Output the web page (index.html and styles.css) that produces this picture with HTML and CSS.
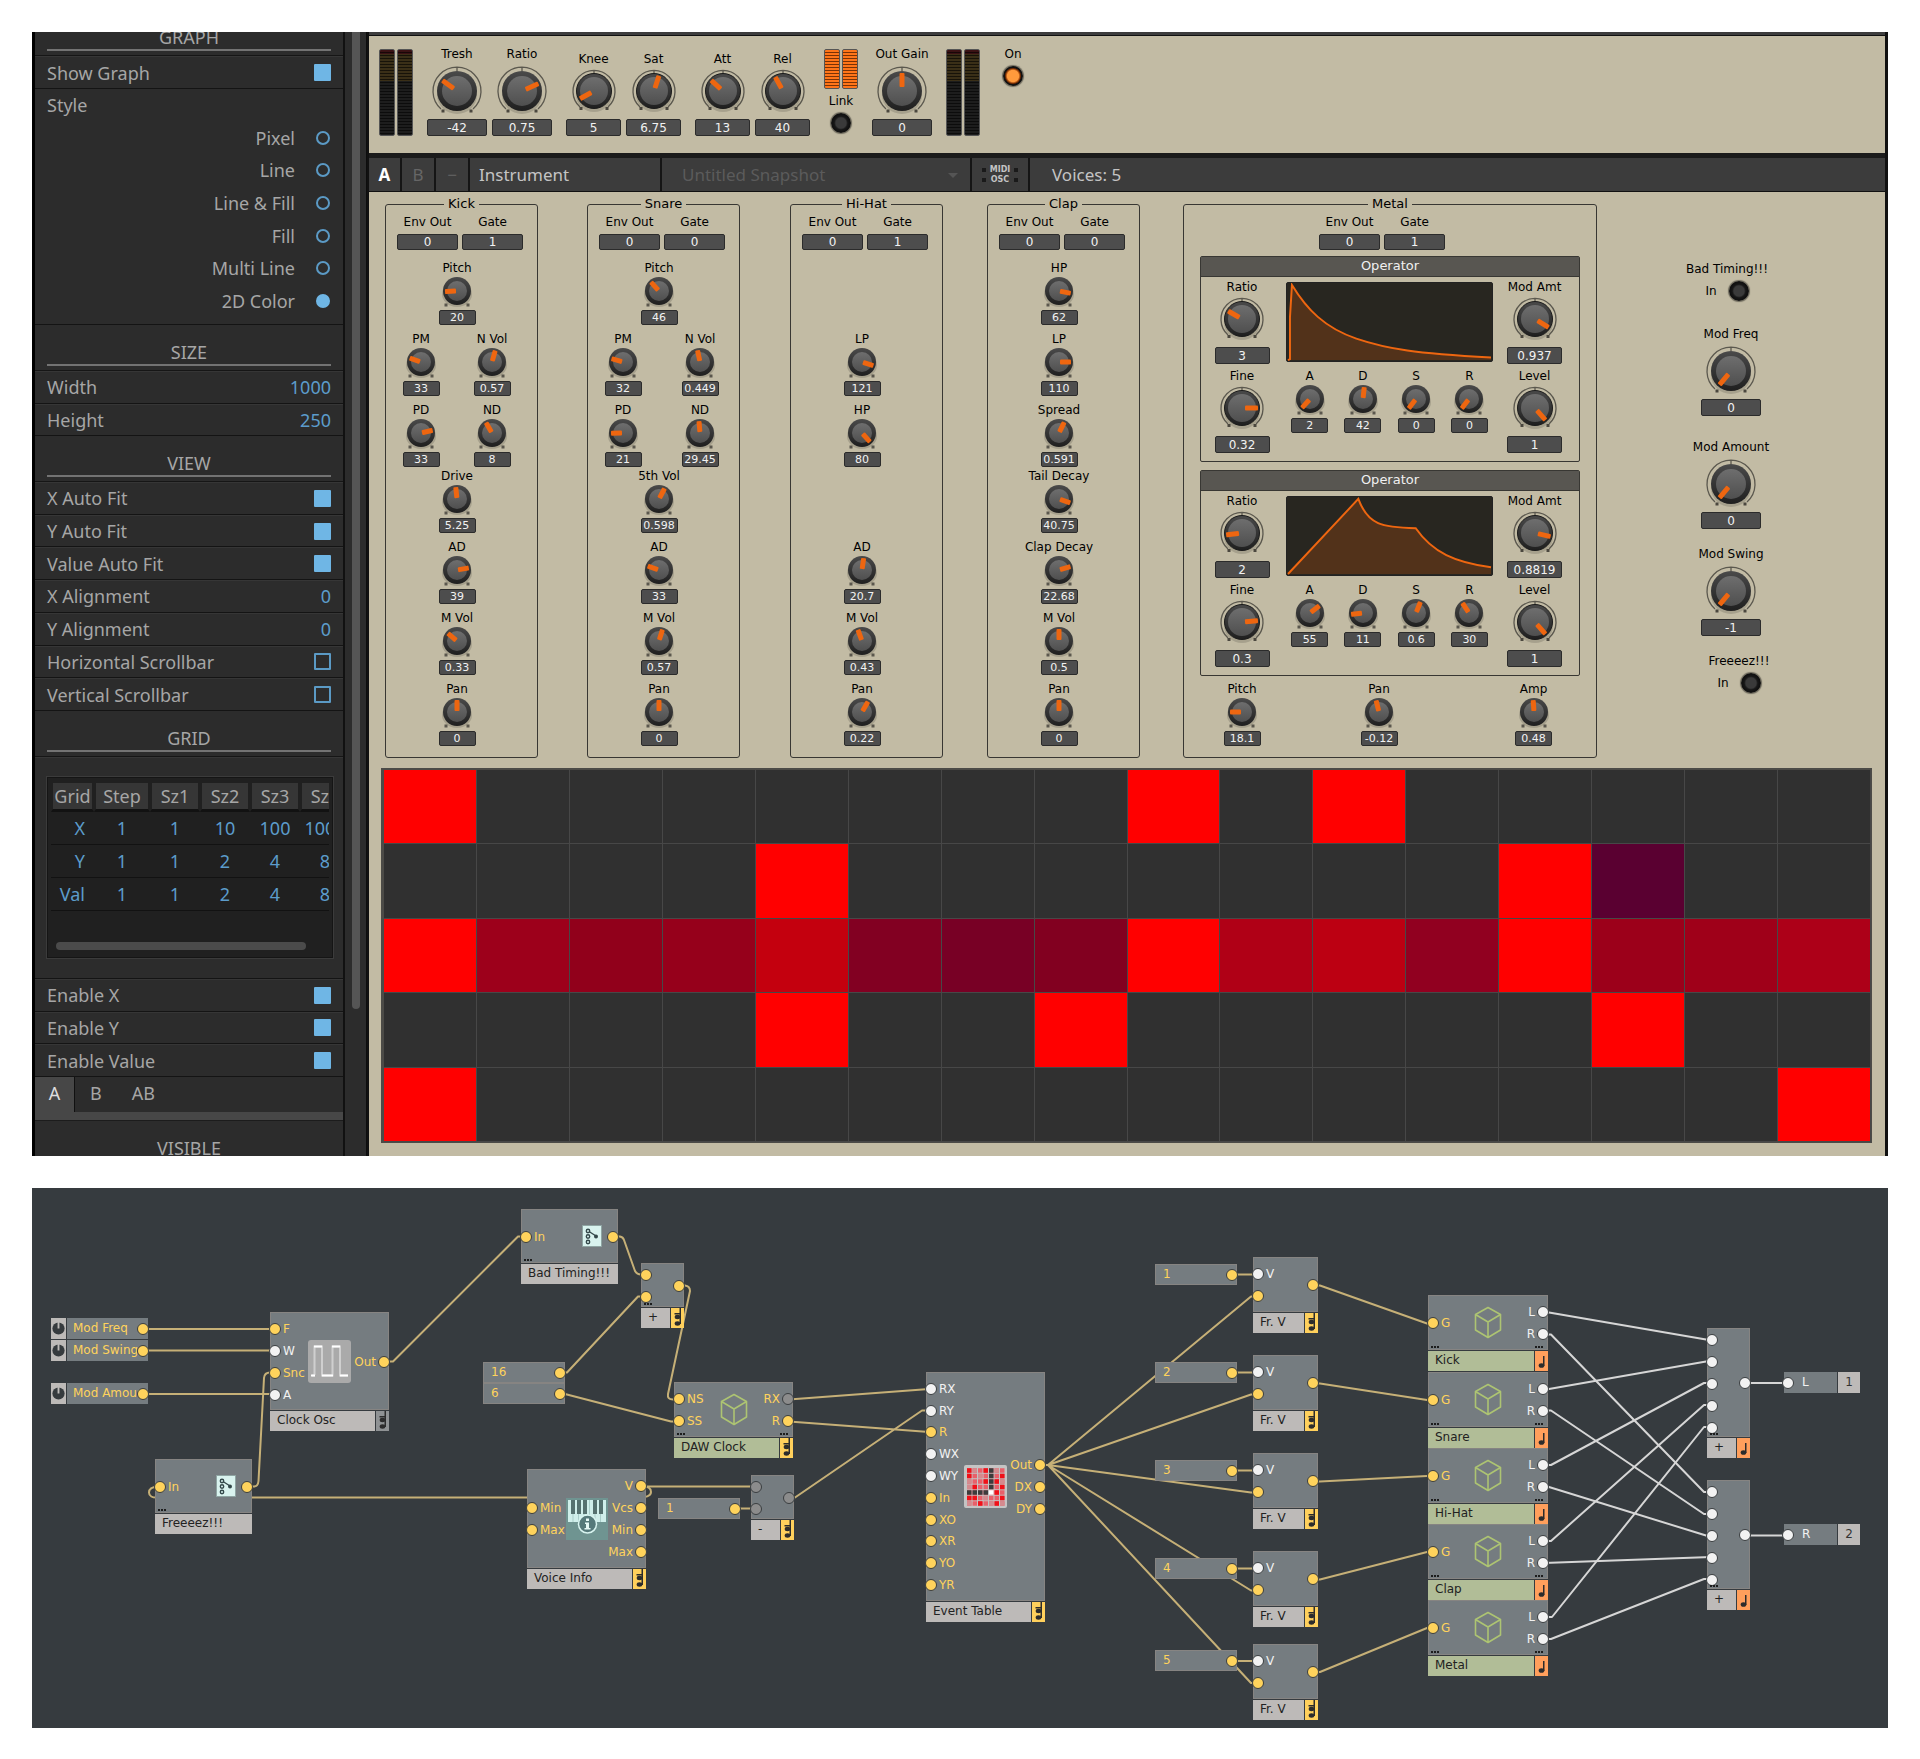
FILE: index.html
```html
<!DOCTYPE html>
<html lang="en">
<head>
<meta charset="utf-8">
<meta name="viewport" content="width=device-width, initial-scale=1">
<title>Drum Machine</title>
<link rel="stylesheet" href="styles.css">
</head>
<body>
<svg class="defs" width="0" height="0" aria-hidden="true">
  <defs>
    <linearGradient id="body" x1="0" y1="0" x2="0" y2="1"><stop offset="0" stop-color="#4a4a4a"/><stop offset="1" stop-color="#1f1f1f"/></linearGradient>
    <linearGradient id="cap" x1="0" y1="0" x2="0" y2="1"><stop offset="0" stop-color="#6e6e6e"/><stop offset="1" stop-color="#4f4f4f"/></linearGradient>
    <symbol id="ks" viewBox="-18 -15 36 34" overflow="visible">
      <ellipse cy="3" rx="15" ry="13" fill="#000" opacity=".14"/>
      <circle r="14" fill="url(#body)"/><circle r="10" fill="url(#cap)"/>
      <path d="M-12.500 12.500h3v3h-3zM9.500 12.500h3v3h-3z" fill="#5a574d"/>
    </symbol>
    <symbol id="km" viewBox="-22 -24 44 52" overflow="visible">
      <path d="M-14 16A21 21 0 1 1 14 16M0-21V-17" fill="none" stroke="#5b584e" stroke-width="1.300"/>
      <ellipse cy="4" rx="18" ry="17" fill="#000" opacity=".14"/>
      <circle r="17.500" fill="url(#body)" stroke="#1b1b1b"/><circle r="14" fill="url(#cap)"/>
      <path d="M-14.500 16h3v3h-3zM11.500 16h3v3h-3z" fill="#4a473e"/>
    </symbol>
    <symbol id="kl" viewBox="-26 -29 52 57" overflow="visible">
      <path d="M-16 18A24 24 0 1 1 16 18M0-24V-20" fill="none" stroke="#5b584e" stroke-width="1.300"/>
      <ellipse cy="4" rx="20" ry="19" fill="#000" opacity=".14"/>
      <circle r="20" fill="url(#body)"/><circle r="15" fill="url(#cap)"/>
      <path d="M-15.500 18.500h3v3h-3zM12.500 18.500h3v3h-3z" fill="#4a473e"/>
    </symbol>
    <rect id="ps" x="-2.500" y="-12" width="5" height="11" rx="1" fill="#ee6610"/>
    <rect id="pm" x="-2.500" y="-16" width="5" height="13" rx="1" fill="#ee6610"/>
    <rect id="pl" x="-2.500" y="-18" width="5" height="14" rx="1" fill="#ee6610"/>
    <symbol id="cube" viewBox="0 0 28 33"><path d="M14 1.500 26.500 8.500V24L14 31.500 1.500 24V8.500zM1.500 8.500 14 16 26.500 8.500M14 16V31.500" fill="none" stroke="#adc472" stroke-width="1.600" stroke-linejoin="round"/></symbol>
    <symbol id="switch" viewBox="0 0 20 22"><path fill="#d9f3ef" stroke="#8fa5a3" d="M.5.5h19v21H.5z"/><g fill="none" stroke="#33484a" stroke-width="1.400"><circle cx="6" cy="6" r="1.700"/><circle cx="6" cy="11.500" r="1.700"/><circle cx="6" cy="17" r="1.700"/><path d="M7 6.500 14 11"/></g><circle cx="14" cy="11.500" r="2" fill="#33484a"/></symbol>
    <symbol id="poly" viewBox="0 0 13 20"><path d="M8.500 0H10v16H8.500zM3.500 5H9v1.500H3.500z"/><ellipse cx="6.500" cy="9" rx="2.800" ry="2.200"/><ellipse cx="6.500" cy="15.500" rx="2.800" ry="2.200"/></symbol>
    <symbol id="mono" viewBox="0 0 13 20"><path d="M8 5h1.500v10H8z"/><ellipse cx="6.500" cy="14.500" rx="2.800" ry="2.300"/></symbol>
    <symbol id="dial" viewBox="0 0 16 21"><circle cx="8" cy="10.500" r="6.500" fill="#363b3e"/><path d="M7 2.500h2v8H7z" fill="#bdbab8"/></symbol>
  </defs>
</svg>

<main class="instrument">
  <aside class="inspector">
    <div class="props">
      <h2 class="section section--cut">GRAPH</h2>
      <div class="rows rows--one">
        <label class="row">Show Graph<input type="checkbox" checked></label>
      </div>
      <fieldset class="style-group">
        <div class="row row--plain">Style</div>
        <label class="row row--radio">Pixel<input type="radio" name="style"></label>
        <label class="row row--radio">Line<input type="radio" name="style"></label>
        <label class="row row--radio">Line &amp; Fill<input type="radio" name="style"></label>
        <label class="row row--radio">Fill<input type="radio" name="style"></label>
        <label class="row row--radio">Multi Line<input type="radio" name="style"></label>
        <label class="row row--radio">2D Color<input type="radio" name="style" checked></label>
      </fieldset>
      <h2 class="section">SIZE</h2>
      <div class="rows rows--two">
        <label class="row">Width<input class="num" type="text" value="1000"></label>
        <label class="row">Height<input class="num" type="text" value="250"></label>
      </div>
      <h2 class="section">VIEW</h2>
      <div class="rows rows--seven">
        <label class="row">X Auto Fit<input type="checkbox" checked></label>
        <label class="row">Y Auto Fit<input type="checkbox" checked></label>
        <label class="row">Value Auto Fit<input type="checkbox" checked></label>
        <label class="row">X Alignment<input class="num" type="text" value="0"></label>
        <label class="row">Y Alignment<input class="num" type="text" value="0"></label>
        <label class="row">Horizontal Scrollbar<input type="checkbox"></label>
        <label class="row">Vertical Scrollbar<input type="checkbox"></label>
      </div>
      <h2 class="section">GRID</h2>
      <div class="grid-area">
        <div class="grid-box">
          <div class="grid-clip">
            <table class="grid-table">
              <thead><tr><th class="c-grid">Grid</th><th class="c-step">Step</th><th>Sz1</th><th>Sz2</th><th>Sz3</th><th>Sz4</th></tr></thead>
              <tbody>
                <tr><td>X</td><td>1</td><td>1</td><td>10</td><td>100</td><td>1000</td></tr>
                <tr><td>Y</td><td>1</td><td>1</td><td>2</td><td>4</td><td>8</td></tr>
                <tr><td>Val</td><td>1</td><td>1</td><td>2</td><td>4</td><td>8</td></tr>
              </tbody>
            </table>
          </div>
          <div class="hscroll"></div>
        </div>
      </div>
      <div class="rows rows--three">
        <label class="row">Enable X<input type="checkbox" checked></label>
        <label class="row">Enable Y<input type="checkbox" checked></label>
        <label class="row">Enable Value<input type="checkbox" checked></label>
      </div>
      <nav class="tabs">
        <button class="tab tab--on" type="button">A</button>
        <button class="tab" type="button">B</button>
        <button class="tab" type="button">AB</button>
      </nav>
      <h2 class="section section--visible">VISIBLE</h2>
    </div>
    <div class="vscroll"><div class="vscroll-thumb"></div></div>
  </aside>

  <div class="stage">
    <div class="bar-edge"></div>
    <section class="compressor">
      <div class="meters"><i class="meter"></i><i class="meter"></i></div>
      <div class="pair">
        <label class="ctl ctl--l">Tresh<svg><use href="#kl"/><use href="#pl" transform="translate(26 29) rotate(-54)"/></svg><input type="text" value="-42"></label>
        <label class="ctl ctl--l">Ratio<svg><use href="#kl"/><use href="#pl" transform="translate(26 29) rotate(66)"/></svg><input type="text" value="0.75"></label>
      </div>
      <div class="pair">
        <label class="ctl ctl--m">Knee<svg><use href="#km"/><use href="#pm" transform="translate(22 24) rotate(-119)"/></svg><input type="text" value="5"></label>
        <label class="ctl ctl--m">Sat<svg><use href="#km"/><use href="#pm" transform="translate(22 24) rotate(18)"/></svg><input type="text" value="6.75"></label>
      </div>
      <div class="pair">
        <label class="ctl ctl--m">Att<svg><use href="#km"/><use href="#pm" transform="translate(22 24) rotate(-48)"/></svg><input type="text" value="13"></label>
        <label class="ctl ctl--m">Rel<svg><use href="#km"/><use href="#pm" transform="translate(22 24) rotate(-29)"/></svg><input type="text" value="40"></label>
      </div>
      <div class="link">
        <div class="meters meters--lit"><i class="meter"></i><i class="meter"></i></div>
        <label class="lamp-label" for="link">Link</label>
        <button class="lamp" id="link" type="button" aria-label="Link"></button>
      </div>
      <label class="ctl ctl--l">Out Gain<svg><use href="#kl"/><use href="#pl" transform="translate(26 29)"/></svg><input type="text" value="0"></label>
      <div class="meters"><i class="meter"></i><i class="meter"></i></div>
      <div class="power">
        <label class="lamp-label" for="on">On</label>
        <button class="lamp lamp--on" id="on" type="button" aria-label="On"></button>
      </div>
    </section>

    <header class="bar">
      <button class="bar-btn bar-btn--on" type="button">A</button>
      <button class="bar-btn" type="button">B</button>
      <button class="bar-btn" type="button">−</button>
      <span class="bar-name">Instrument</span>
      <span class="bar-snap"><select aria-label="Snapshot"><option>Untitled Snapshot</option></select></span>
      <span class="bar-midi"><i></i><b>MIDI<br>OSC</b><i></i></span>
      <span class="bar-voices">Voices: 5</span>
    </header>

    <section class="panel">
      <div class="strips">
        <fieldset class="strip">
          <legend>Kick</legend>
          <div class="io"><label>Env Out<input type="text" value="0"></label><label>Gate<input type="text" value="1"></label></div>
          <div class="knobs">
            <label class="ctl span r1">Pitch<svg><use href="#ks"/><use href="#ps" transform="translate(18 15) rotate(-93)"/></svg><input type="text" value="20"></label>
            <label class="ctl r2">PM<svg><use href="#ks"/><use href="#ps" transform="translate(18 15) rotate(-71)"/></svg><input type="text" value="33"></label>
            <label class="ctl r2">N Vol<svg><use href="#ks"/><use href="#ps" transform="translate(18 15) rotate(16)"/></svg><input type="text" value="0.57"></label>
            <label class="ctl r3">PD<svg><use href="#ks"/><use href="#ps" transform="translate(18 15) rotate(77)"/></svg><input type="text" value="33"></label>
            <label class="ctl r3">ND<svg><use href="#ks"/><use href="#ps" transform="translate(18 15) rotate(-30)"/></svg><input type="text" value="8"></label>
            <label class="ctl span r4">Drive<svg><use href="#ks"/><use href="#ps" transform="translate(18 15) rotate(-6)"/></svg><input type="text" value="5.25"></label>
            <label class="ctl span r5">AD<svg><use href="#ks"/><use href="#ps" transform="translate(18 15) rotate(80)"/></svg><input type="text" value="39"></label>
            <label class="ctl span r6">M Vol<svg><use href="#ks"/><use href="#ps" transform="translate(18 15) rotate(-50)"/></svg><input type="text" value="0.33"></label>
            <label class="ctl span r7">Pan<svg><use href="#ks"/><use href="#ps" transform="translate(18 15)"/></svg><input type="text" value="0"></label>
          </div>
        </fieldset>
        <fieldset class="strip">
          <legend>Snare</legend>
          <div class="io"><label>Env Out<input type="text" value="0"></label><label>Gate<input type="text" value="0"></label></div>
          <div class="knobs knobs--wide">
            <label class="ctl span r1">Pitch<svg><use href="#ks"/><use href="#ps" transform="translate(18 15) rotate(-42)"/></svg><input type="text" value="46"></label>
            <label class="ctl r2">PM<svg><use href="#ks"/><use href="#ps" transform="translate(18 15) rotate(-74)"/></svg><input type="text" value="32"></label>
            <label class="ctl r2">N Vol<svg><use href="#ks"/><use href="#ps" transform="translate(18 15) rotate(-12)"/></svg><input type="text" value="0.449"></label>
            <label class="ctl r3">PD<svg><use href="#ks"/><use href="#ps" transform="translate(18 15) rotate(-91)"/></svg><input type="text" value="21"></label>
            <label class="ctl r3">ND<svg><use href="#ks"/><use href="#ps" transform="translate(18 15) rotate(-5)"/></svg><input type="text" value="29.45"></label>
            <label class="ctl span r4">5th Vol<svg><use href="#ks"/><use href="#ps" transform="translate(18 15) rotate(28)"/></svg><input type="text" value="0.598"></label>
            <label class="ctl span r5">AD<svg><use href="#ks"/><use href="#ps" transform="translate(18 15) rotate(-71)"/></svg><input type="text" value="33"></label>
            <label class="ctl span r6">M Vol<svg><use href="#ks"/><use href="#ps" transform="translate(18 15) rotate(17)"/></svg><input type="text" value="0.57"></label>
            <label class="ctl span r7">Pan<svg><use href="#ks"/><use href="#ps" transform="translate(18 15)"/></svg><input type="text" value="0"></label>
          </div>
        </fieldset>
        <fieldset class="strip">
          <legend>Hi-Hat</legend>
          <div class="io"><label>Env Out<input type="text" value="0"></label><label>Gate<input type="text" value="1"></label></div>
          <div class="knobs">
            <label class="ctl span r2">LP<svg><use href="#ks"/><use href="#ps" transform="translate(18 15) rotate(108)"/></svg><input type="text" value="121"></label>
            <label class="ctl span r3">HP<svg><use href="#ks"/><use href="#ps" transform="translate(18 15) rotate(138)"/></svg><input type="text" value="80"></label>
            <label class="ctl span r5">AD<svg><use href="#ks"/><use href="#ps" transform="translate(18 15) rotate(8)"/></svg><input type="text" value="20.7"></label>
            <label class="ctl span r6">M Vol<svg><use href="#ks"/><use href="#ps" transform="translate(18 15) rotate(-20)"/></svg><input type="text" value="0.43"></label>
            <label class="ctl span r7">Pan<svg><use href="#ks"/><use href="#ps" transform="translate(18 15) rotate(30)"/></svg><input type="text" value="0.22"></label>
          </div>
        </fieldset>
        <fieldset class="strip">
          <legend>Clap</legend>
          <div class="io"><label>Env Out<input type="text" value="0"></label><label>Gate<input type="text" value="0"></label></div>
          <div class="knobs">
            <label class="ctl span r1">HP<svg><use href="#ks"/><use href="#ps" transform="translate(18 15) rotate(101)"/></svg><input type="text" value="62"></label>
            <label class="ctl span r2">LP<svg><use href="#ks"/><use href="#ps" transform="translate(18 15) rotate(90)"/></svg><input type="text" value="110"></label>
            <label class="ctl span r3">Spread<svg><use href="#ks"/><use href="#ps" transform="translate(18 15) rotate(26)"/></svg><input type="text" value="0.591"></label>
            <label class="ctl span r4">Tail Decay<svg><use href="#ks"/><use href="#ps" transform="translate(18 15) rotate(109)"/></svg><input type="text" value="40.75"></label>
            <label class="ctl span r5">Clap Decay<svg><use href="#ks"/><use href="#ps" transform="translate(18 15) rotate(73)"/></svg><input type="text" value="22.68"></label>
            <label class="ctl span r6">M Vol<svg><use href="#ks"/><use href="#ps" transform="translate(18 15)"/></svg><input type="text" value="0.5"></label>
            <label class="ctl span r7">Pan<svg><use href="#ks"/><use href="#ps" transform="translate(18 15)"/></svg><input type="text" value="0"></label>
          </div>
        </fieldset>
        <fieldset class="strip strip--metal">
          <legend>Metal</legend>
          <div class="io"><label>Env Out<input type="text" value="0"></label><label>Gate<input type="text" value="1"></label></div>
          <section class="operator">
            <h3>Operator</h3>
            <div class="op-body">
              <div class="op-side">
                <label class="ctl ctl--m">Ratio<svg><use href="#km"/><use href="#pm" transform="translate(22 24) rotate(-60)"/></svg><input type="text" value="3"></label>
                <label class="ctl ctl--m">Fine<svg><use href="#km"/><use href="#pm" transform="translate(22 24) rotate(90)"/></svg><input type="text" value="0.32"></label>
              </div>
              <div class="op-mid">
                <svg class="env" viewBox="0 0 207 80" preserveAspectRatio="none"><path class="env-fill" d="M1 79 3 78V35L5 2C20 27 38 46 70 57S130 72 206 76.500V79z"/><path class="env-line" d="M1 79 3 78V35L5 2C20 27 38 46 70 57S130 72 206 76.500"/></svg>
                <div class="adsr">
                  <label class="ctl">A<svg><use href="#ks"/><use href="#ps" transform="translate(18 15) rotate(-138)"/></svg><input type="text" value="2"></label>
                  <label class="ctl">D<svg><use href="#ks"/><use href="#ps" transform="translate(18 15) rotate(6)"/></svg><input type="text" value="42"></label>
                  <label class="ctl">S<svg><use href="#ks"/><use href="#ps" transform="translate(18 15) rotate(-142)"/></svg><input type="text" value="0"></label>
                  <label class="ctl">R<svg><use href="#ks"/><use href="#ps" transform="translate(18 15) rotate(-142)"/></svg><input type="text" value="0"></label>
                </div>
              </div>
              <div class="op-side">
                <label class="ctl ctl--m">Mod Amt<svg><use href="#km"/><use href="#pm" transform="translate(22 24) rotate(122)"/></svg><input type="text" value="0.937"></label>
                <label class="ctl ctl--m">Level<svg><use href="#km"/><use href="#pm" transform="translate(22 24) rotate(139)"/></svg><input type="text" value="1"></label>
              </div>
            </div>
          </section>
          <section class="operator">
            <h3>Operator</h3>
            <div class="op-body">
              <div class="op-side">
                <label class="ctl ctl--m">Ratio<svg><use href="#km"/><use href="#pm" transform="translate(22 24) rotate(-97)"/></svg><input type="text" value="2"></label>
                <label class="ctl ctl--m">Fine<svg><use href="#km"/><use href="#pm" transform="translate(22 24) rotate(85)"/></svg><input type="text" value="0.3"></label>
              </div>
              <div class="op-mid">
                <svg class="env" viewBox="0 0 207 80" preserveAspectRatio="none"><path class="env-fill" d="M1 79 72 2C82 29 96 31 130 32C147 57 170 67 206 72V79z"/><path class="env-line" d="M1 79 72 2C82 29 96 31 130 32C147 57 170 67 206 72"/></svg>
                <div class="adsr">
                  <label class="ctl">A<svg><use href="#ks"/><use href="#ps" transform="translate(18 15) rotate(52)"/></svg><input type="text" value="55"></label>
                  <label class="ctl">D<svg><use href="#ks"/><use href="#ps" transform="translate(18 15) rotate(-97)"/></svg><input type="text" value="11"></label>
                  <label class="ctl">S<svg><use href="#ks"/><use href="#ps" transform="translate(18 15) rotate(22)"/></svg><input type="text" value="0.6"></label>
                  <label class="ctl">R<svg><use href="#ks"/><use href="#ps" transform="translate(18 15) rotate(-33)"/></svg><input type="text" value="30"></label>
                </div>
              </div>
              <div class="op-side">
                <label class="ctl ctl--m">Mod Amt<svg><use href="#km"/><use href="#pm" transform="translate(22 24) rotate(103)"/></svg><input type="text" value="0.8819"></label>
                <label class="ctl ctl--m">Level<svg><use href="#km"/><use href="#pm" transform="translate(22 24) rotate(139)"/></svg><input type="text" value="1"></label>
              </div>
            </div>
          </section>
          <div class="metal-out">
            <label class="ctl">Pitch<svg><use href="#ks"/><use href="#ps" transform="translate(18 15) rotate(-90)"/></svg><input type="text" value="18.1"></label>
            <label class="ctl">Pan<svg><use href="#ks"/><use href="#ps" transform="translate(18 15) rotate(-14)"/></svg><input type="text" value="-0.12"></label>
            <label class="ctl">Amp<svg><use href="#ks"/><use href="#ps" transform="translate(18 15) rotate(-4)"/></svg><input type="text" value="0.48"></label>
          </div>
        </fieldset>
        <div class="mods">
          <div class="trigger trigger--timing"><span>Bad Timing!!!</span><div><label for="timing">In</label><button class="lamp" id="timing" type="button" aria-label="Bad Timing In"></button></div></div>
          <label class="ctl ctl--l mod-freq">Mod Freq<svg><use href="#kl"/><use href="#pl" transform="translate(26 29) rotate(-140)"/></svg><input type="text" value="0"></label>
          <label class="ctl ctl--l mod-amount">Mod Amount<svg><use href="#kl"/><use href="#pl" transform="translate(26 29) rotate(-140)"/></svg><input type="text" value="0"></label>
          <label class="ctl ctl--l mod-swing">Mod Swing<svg><use href="#kl"/><use href="#pl" transform="translate(26 29) rotate(-140)"/></svg><input type="text" value="-1"></label>
          <div class="trigger trigger--freeze"><span>Freeeez!!!</span><div><label for="freeze">In</label><button class="lamp" id="freeze" type="button" aria-label="Freeeez In"></button></div></div>
        </div>
      </div>

      <div class="sequencer">
        <i style="background:#f00"></i><i></i><i></i><i></i><i></i><i></i><i></i><i></i><i style="background:#f00"></i><i></i><i style="background:#f00"></i><i></i><i></i><i></i><i></i><i></i>
        <i></i><i></i><i></i><i></i><i style="background:#f00"></i><i></i><i></i><i></i><i></i><i></i><i></i><i></i><i style="background:#f00"></i><i style="background:#5a0031"></i><i></i><i></i>
        <i style="background:#f00"></i><i style="background:#9d001b"></i><i style="background:#91001b"></i><i style="background:#96001b"></i><i style="background:#c4000e"></i><i style="background:#820022"></i><i style="background:#780025"></i><i style="background:#820020"></i><i style="background:#f00"></i><i style="background:#b00016"></i><i style="background:#bc0012"></i><i style="background:#910020"></i><i style="background:#f00"></i><i style="background:#9c001a"></i><i style="background:#9f0019"></i><i style="background:#ad0018"></i>
        <i></i><i></i><i></i><i></i><i style="background:#f00"></i><i></i><i></i><i style="background:#f00"></i><i></i><i></i><i></i><i></i><i></i><i style="background:#f00"></i><i></i><i></i>
        <i style="background:#f00"></i><i></i><i></i><i></i><i></i><i></i><i></i><i></i><i></i><i></i><i></i><i></i><i></i><i></i><i></i><i style="background:#f00"></i>
      </div>
    </section>
  </div>
</main>

<section class="patch">
  <svg class="wires" viewBox="32 1187 1856 540" width="1856" height="540">
    <g class="wire">
      <path d="M144 1328H274M144 1349.500H274M144 1393H274"/>
      <path d="M248 1485.500H254Q258 1485.500 258.500 1480L264 1377Q264.500 1371.500 270 1371.500H274"/>
      <path d="M158 1485.500Q149 1486 149 1491.500T158 1496.500H636Q651 1497 651 1491T642 1485.500"/>
      <path d="M386 1360.500H393L518 1235.500H524"/>
      <path d="M614 1235.500H620Q623 1236 624 1239L635 1270Q637 1273.500 641 1273.500H645"/>
      <path d="M560 1371.500H567L638 1295.500H645M560 1393H565L671 1420.500H677"/>
      <path d="M680 1284.500H685Q690 1285 690 1290L668 1393Q667 1398.500 673 1398.500H677"/>
      <path d="M789 1398.500 929 1388M789 1420.500 929 1431M789 1496.500H795L922 1409.500H929"/>
      <path d="M642 1485.500H754M735 1507.500H754"/>
      <path d="M1041 1464H1048L1251 1295.500H1257M1048 1464 1251 1393.500H1257M1048 1464 1251 1491.500H1257M1048 1464 1251 1589.500H1257M1048 1464 1251 1682H1257"/>
      <path d="M1232 1273.500H1257M1232 1371.500H1257M1232 1469.500H1257M1232 1567.500H1257M1232 1660H1257"/>
      <path d="M1314 1284.500H1320L1427 1322.500H1432M1314 1382.500H1320L1427 1399H1432M1314 1480.500H1320L1427 1475H1432M1314 1578.500H1320L1427 1551H1432M1314 1671H1320L1427 1627H1432"/>
    </g>
    <g class="wire wire--audio">
      <path d="M1544 1311.500H1549L1706 1338.500H1711M1544 1388H1549L1706 1360.500H1711M1544 1464H1551L1704 1382H1711M1544 1540H1551L1704 1404H1711M1544 1616H1552L1704 1426H1711"/>
      <path d="M1544 1333.500H1551L1704 1491H1711M1544 1409.500H1551L1704 1513H1711M1544 1486H1549L1706 1534.500H1711M1544 1562 1711 1556M1544 1638H1551L1704 1578H1711"/>
      <path d="M1746 1382H1788M1746 1534.500H1788"/>
    </g>
  </svg>

  <div class="knobref" style="left:19px;top:130px"><svg><use href="#dial"/></svg><span>Mod Freq</span><b class="port"></b></div>
  <div class="knobref" style="left:19px;top:152px"><svg><use href="#dial"/></svg><span>Mod Swing</span><b class="port"></b></div>
  <div class="knobref" style="left:19px;top:195px"><svg><use href="#dial"/></svg><span>Mod Amour</span><b class="port"></b></div>

  <div class="node" style="left:238px;top:124px;width:119px">
    <div class="node-body" style="height:98px">
      <div class="ports ports--6"><b class="port">F</b><b class="port port--w">W</b><b class="port">Snc</b><b class="port port--w">A</b></div>
      <svg class="pic" width="43" height="43" viewBox="0 0 43 43"><rect width="43" height="43" rx="3" fill="#aaa"/><path d="M4 35.500H7M6.500 35V6.500H14V35.500H24.500V6.500H32V35.500H40" fill="none" stroke="#cfcfcf" stroke-width="2"/><path d="M3 35.500H7M6 6.500H14M14 35.500H25M24 6.500H32M32 35.500H40" stroke="#fff" stroke-width="2"/></svg>
      <div class="ports ports--out ports--38"><b class="port">Out</b></div>
    </div>
    <div class="node-foot"><span>Clock Osc</span><svg class="badge badge--g"><use href="#poly"/></svg></div>
  </div>
  <div class="node" style="left:123px;top:271px;width:97px">
    <div class="node-body node-body--switch dots" style="height:54px">
      <div class="ports ports--17"><b class="port">In</b></div>
      <svg class="pic" width="20" height="22"><use href="#switch"/></svg>
      <div class="ports ports--out ports--17"><b class="port"></b></div>
    </div>
    <div class="node-foot"><span>Freeeez!!!</span></div>
  </div>
  <div class="node" style="left:489px;top:21px;width:97px">
    <div class="node-body node-body--switch dots" style="height:54px">
      <div class="ports ports--17"><b class="port">In</b></div>
      <svg class="pic" width="20" height="22"><use href="#switch"/></svg>
      <div class="ports ports--out ports--17"><b class="port"></b></div>
    </div>
    <div class="node-foot"><span>Bad Timing!!!</span></div>
  </div>
  <div class="node" style="left:609px;top:75px;width:43px">
    <div class="node-body dots" style="height:44px"><div class="ports"><b class="port"></b><b class="port"></b></div><div class="ports ports--out ports--11"><b class="port"></b></div></div>
    <div class="node-foot"><span>+</span><svg class="badge"><use href="#poly"/></svg></div>
  </div>
  <div class="const const--wide" style="left:451px;top:174px"><span>16</span><b class="port"></b></div>
  <div class="const const--wide" style="left:451px;top:195px"><span>6</span><b class="port"></b></div>
  <div class="node" style="left:642px;top:194px;width:119px">
    <div class="node-body dots dots--both" style="height:55px">
      <div class="ports ports--6"><b class="port">NS</b><b class="port">SS</b></div>
      <svg class="pic" width="28" height="33"><use href="#cube"/></svg>
      <div class="ports ports--out ports--6"><b class="port port--g">RX</b><b class="port">R</b></div>
    </div>
    <div class="node-foot node-foot--macro"><span>DAW Clock</span><svg class="badge"><use href="#poly"/></svg></div>
  </div>
  <div class="node" style="left:495px;top:281px;width:119px">
    <div class="node-body" style="height:99px">
      <div class="ports ports--28"><b class="port">Min</b><b class="port">Max</b></div>
      <svg class="pic" width="42" height="42" viewBox="0 0 42 42"><rect width="42" height="42" fill="#6f9491"/><path d="M2 2h38v22H2z" fill="#cfeeea"/><path d="M7 2v22M12.500 2v22M18 2v22M23.500 2v22M29 2v22M34.500 2v22" stroke="#a9cdc9" stroke-width="1"/><path d="M5 2h4v14H5zM11 2h4v14h-4zM17 2h4v14h-4zM27 2h4v14h-4zM33 2h4v14h-4z" fill="#55716f"/><circle cx="21.500" cy="26" r="9" fill="#55797a" stroke="#d7f3ef" stroke-width="1.500"/><path d="M20 20.500h3v2.500h-3zM19 24.500h4v5.500h1.500v1.500H18.500V30H20v-4h-1z" fill="#e4f8f5"/></svg>
      <div class="ports ports--out ports--6"><b class="port">V</b><b class="port">Vcs</b><b class="port">Min</b><b class="port">Max</b></div>
    </div>
    <div class="node-foot"><span>Voice Info</span><svg class="badge"><use href="#poly"/></svg></div>
  </div>
  <div class="const const--wide" style="left:626px;top:310px"><span>1</span><b class="port"></b></div>
  <div class="node" style="left:719px;top:287px;width:43px">
    <div class="node-body" style="height:44px"><div class="ports"><b class="port port--g"></b><b class="port port--g"></b></div><div class="ports ports--out ports--11"><b class="port port--g"></b></div></div>
    <div class="node-foot"><span>-</span><svg class="badge"><use href="#poly"/></svg></div>
  </div>
  <div class="node" style="left:894px;top:184px;width:119px">
    <div class="node-body" style="height:229px">
      <div class="ports ports--6 ports--ten"><b class="port port--w">RX</b><b class="port port--w">RY</b><b class="port">R</b><b class="port port--w">WX</b><b class="port port--w">WY</b><b class="port">In</b><b class="port">XO</b><b class="port">XR</b><b class="port">YO</b><b class="port">YR</b></div>
      <svg class="pic" width="43" height="43" viewBox="0 0 43 43"><rect width="43" height="43" rx="2" fill="#c4c4c4"/><g stroke-width="4.500" stroke-dasharray="4.500 1" fill="none"><path stroke="#e8606a" d="M3 5.500H41M3 11H41M3 16.500H41M3 22H41M3 33H41M3 38.500H41M3 27.500H41"/></g><path fill="#f01018" d="M3 3.200h4.500v4.500H3zM19.500 3.200H24v4.500h-4.500zM3 8.700h4.500v4.500H3zM36 8.700h4.500v4.500H36zM19.500 14.200H24v4.500h-4.500zM30.500 14.200H35v4.500h-4.500zM8.500 19.700H13v4.500H8.500zM36 19.700h4.500v4.500H36zM30.500 25.200H35v4.500h-4.500zM3 30.700h4.500v4.500H3zM8.500 30.700H13v4.500H8.500zM36 30.700h4.500v4.500H36zM14 36.200h4.500v4.500H14zM30.500 36.200H35v4.500h-4.500z"/><path fill="#d48a8e" d="M8.500 3.200H13v4.500H8.500zM30.500 3.200H35v4.500h-4.500zM14 8.700h4.500v4.500H14zM3 14.200h4.500v4.500H3zM36 14.200h4.500v4.500H36zM3 19.700h4.500v4.500H3zM19.500 30.700H24v4.500h-4.500zM3 36.200h4.500v4.500H3zM25 36.200h4.500v4.500H25zM36 36.200h4.500v4.500H36z"/><path fill="#3c3c3c" d="M25 3.200h4.500v4.500H25zM25 8.700h4.500v4.500H25zM25 14.200h4.500v4.500H25zM25 19.700h4.500v4.500H25zM3 25.200h4.500v4.500H3zM8.500 25.200H13v4.500H8.500zM14 25.200h4.500v4.500H14zM19.500 25.200H24v4.500h-4.500z"/><path fill="#fff" d="M25 25.200h4.500v4.500H25z"/></svg>
      <div class="ports ports--out ports--82"><b class="port">Out</b><b class="port">DX</b><b class="port">DY</b></div>
    </div>
    <div class="node-foot"><span>Event Table</span><svg class="badge"><use href="#poly"/></svg></div>
  </div>

  <div class="const" style="left:1123px;top:76px"><span>1</span><b class="port"></b></div>
  <div class="const" style="left:1123px;top:174px"><span>2</span><b class="port"></b></div>
  <div class="const" style="left:1123px;top:272px"><span>3</span><b class="port"></b></div>
  <div class="const" style="left:1123px;top:370px"><span>4</span><b class="port"></b></div>
  <div class="const" style="left:1123px;top:462px"><span>5</span><b class="port"></b></div>

  <div class="node" style="left:1221px;top:69px;width:65px"><div class="node-body" style="height:55px"><div class="ports ports--6"><b class="port port--w">V</b><b class="port"></b></div><div class="ports ports--out ports--17"><b class="port"></b></div></div><div class="node-foot"><span>Fr. V</span><svg class="badge"><use href="#poly"/></svg></div></div>
  <div class="node" style="left:1221px;top:167px;width:65px"><div class="node-body" style="height:55px"><div class="ports ports--6"><b class="port port--w">V</b><b class="port"></b></div><div class="ports ports--out ports--17"><b class="port"></b></div></div><div class="node-foot"><span>Fr. V</span><svg class="badge"><use href="#poly"/></svg></div></div>
  <div class="node" style="left:1221px;top:265px;width:65px"><div class="node-body" style="height:55px"><div class="ports ports--6"><b class="port port--w">V</b><b class="port"></b></div><div class="ports ports--out ports--17"><b class="port"></b></div></div><div class="node-foot"><span>Fr. V</span><svg class="badge"><use href="#poly"/></svg></div></div>
  <div class="node" style="left:1221px;top:363px;width:65px"><div class="node-body" style="height:55px"><div class="ports ports--6"><b class="port port--w">V</b><b class="port"></b></div><div class="ports ports--out ports--17"><b class="port"></b></div></div><div class="node-foot"><span>Fr. V</span><svg class="badge"><use href="#poly"/></svg></div></div>
  <div class="node" style="left:1221px;top:456px;width:65px"><div class="node-body" style="height:55px"><div class="ports ports--6"><b class="port port--w">V</b><b class="port"></b></div><div class="ports ports--out ports--17"><b class="port"></b></div></div><div class="node-foot"><span>Fr. V</span><svg class="badge"><use href="#poly"/></svg></div></div>

  <div class="node" style="left:1396px;top:107px;width:120px"><div class="node-body dots dots--both" style="height:55px"><div class="ports ports--17"><b class="port">G</b></div><svg class="pic" width="28" height="33"><use href="#cube"/></svg><div class="ports ports--out ports--6"><b class="port port--w">L</b><b class="port port--w">R</b></div></div><div class="node-foot node-foot--macro"><span>Kick</span><svg class="badge badge--o"><use href="#mono"/></svg></div></div>
  <div class="node" style="left:1396px;top:184px;width:120px"><div class="node-body dots dots--both" style="height:55px"><div class="ports ports--17"><b class="port">G</b></div><svg class="pic" width="28" height="33"><use href="#cube"/></svg><div class="ports ports--out ports--6"><b class="port port--w">L</b><b class="port port--w">R</b></div></div><div class="node-foot node-foot--macro"><span>Snare</span><svg class="badge badge--o"><use href="#mono"/></svg></div></div>
  <div class="node" style="left:1396px;top:260px;width:120px"><div class="node-body dots dots--both" style="height:55px"><div class="ports ports--17"><b class="port">G</b></div><svg class="pic" width="28" height="33"><use href="#cube"/></svg><div class="ports ports--out ports--6"><b class="port port--w">L</b><b class="port port--w">R</b></div></div><div class="node-foot node-foot--macro"><span>Hi-Hat</span><svg class="badge badge--o"><use href="#mono"/></svg></div></div>
  <div class="node" style="left:1396px;top:336px;width:120px"><div class="node-body dots dots--both" style="height:55px"><div class="ports ports--17"><b class="port">G</b></div><svg class="pic" width="28" height="33"><use href="#cube"/></svg><div class="ports ports--out ports--6"><b class="port port--w">L</b><b class="port port--w">R</b></div></div><div class="node-foot node-foot--macro"><span>Clap</span><svg class="badge badge--o"><use href="#mono"/></svg></div></div>
  <div class="node" style="left:1396px;top:412px;width:120px"><div class="node-body dots dots--both" style="height:55px"><div class="ports ports--17"><b class="port">G</b></div><svg class="pic" width="28" height="33"><use href="#cube"/></svg><div class="ports ports--out ports--6"><b class="port port--w">L</b><b class="port port--w">R</b></div></div><div class="node-foot node-foot--macro"><span>Metal</span><svg class="badge badge--o"><use href="#mono"/></svg></div></div>

  <div class="node" style="left:1675px;top:140px;width:43px"><div class="node-body dots" style="height:109px"><div class="ports"><b class="port port--w"></b><b class="port port--w"></b><b class="port port--w"></b><b class="port port--w"></b><b class="port port--w"></b></div><div class="ports ports--out ports--44"><b class="port port--w"></b></div></div><div class="node-foot"><span>+</span><svg class="badge badge--o"><use href="#mono"/></svg></div></div>
  <div class="node" style="left:1675px;top:292px;width:43px"><div class="node-body dots" style="height:109px"><div class="ports"><b class="port port--w"></b><b class="port port--w"></b><b class="port port--w"></b><b class="port port--w"></b><b class="port port--w"></b></div><div class="ports ports--out ports--44"><b class="port port--w"></b></div></div><div class="node-foot"><span>+</span><svg class="badge badge--o"><use href="#mono"/></svg></div></div>

  <div class="outlet" style="left:1752px;top:184px"><b class="port port--w"></b><span>L</span><em>1</em></div>
  <div class="outlet" style="left:1752px;top:336px"><b class="port port--w"></b><span>R</span><em>2</em></div>
</section>
</body>
</html>
```
FILE: styles.css
```css
* { box-sizing: border-box; }

body {
  margin: 0;
  padding: 32px;
  background: #fff;
  font: 12px/16px "DejaVu Sans", sans-serif;
  color: #000;
}

input, select, button { font: inherit; color: inherit; margin: 0; padding: 0; border: 0; background: none; }
fieldset { margin: 0; padding: 0; border: 0; min-width: 0; }
i, em { font-style: normal; }
b { font-weight: 400; }
.defs { position: absolute; }

.instrument {
  display: grid;
  grid-template-columns: 335px minmax(0, 1fr);
  background: #151515;
  overflow: hidden;
}

/* Property inspector */
.inspector {
  display: flex;
  height: 0;
  min-height: 100%;
  overflow: hidden;
  border-left: 3px solid #000;
  background: #2c2c2c;
  color: #a6a6a6;
  font: 18px/20px "Noto Sans", sans-serif;
}
.props { flex: 1; min-width: 0; border-right: 2px solid #111; }
.vscroll { flex: none; width: 22px; padding: 0 6px 0 7px; border-right: 1px solid #0d0d0d; }
.vscroll-thumb { height: 977px; background: #555; border-radius: 0 0 5px 5px; }

.section {
  height: 46px;
  margin: 0;
  padding: 17px 12px 0;
  border-bottom: 1px solid #161616;
  font: inherit;
  text-align: center;
}
.section::after { content: ""; display: block; height: 2px; margin-top: 2px; background: #737373; }
.section--cut { margin-top: -22px; }
.section--visible { border-top: 1px solid #1c1c1c; }

.rows { display: grid; grid-auto-rows: 1fr; }
.rows--one { height: 33px; }
.rows--two { height: 65px; }
.rows--three { height: 98px; }
.rows--seven { height: 229px; }
.row {
  display: flex;
  align-items: center;
  justify-content: space-between;
  padding: 0 12px;
  border-top: 1px solid #363636;
  border-bottom: 1px solid #141414;
}
.row--plain, .row--radio { border: 0; }
.row--radio { justify-content: flex-end; gap: 21px; }
.style-group { display: grid; grid-auto-rows: 1fr; height: 236px; padding-bottom: 7px; border-bottom: 1px solid #141414; }
.num { width: 80px; text-align: right; color: #5c9ccb; }

input[type="checkbox"], input[type="radio"] { appearance: none; flex: none; width: 17px; height: 17px; border: 2px solid #5b9ac5; border-radius: 1px; }
input[type="checkbox"]:checked { background: #6fb6e5; border-color: #6fb6e5; }
input[type="radio"] { width: 14px; height: 14px; margin-right: 1px; border-radius: 50%; }
input[type="radio"]:checked { background: #6fb6e5; border-color: #6fb6e5; }

.grid-area { height: 222px; padding: 18px 9px 19px 11px; border-bottom: 1px solid #141414; border-top: 1px solid #363636; }
.grid-box { height: 100%; padding: 4px 4px 0; border: 1px solid #3b3b3b; outline: 1px solid #151515; outline-offset: -2px; background: #202020; }
.grid-clip { overflow: hidden; }
.grid-table { table-layout: fixed; width: 299px; border-collapse: separate; border-spacing: 0; }
.grid-table th { width: 50px; height: 31px; padding: 0; font-weight: 400; background: #363636; border: 2px solid #202020; border-bottom: 3px solid #121212; }
.grid-table .c-grid { width: 43px; }
.grid-table .c-step { width: 56px; }
.grid-table td { height: 33px; padding: 0; text-align: center; color: #5c9ccb; border-bottom: 1px solid #121212; }
.grid-table td:first-child { text-align: right; padding-right: 9px; }
.hscroll { width: 250px; height: 8px; margin: 31px 0 0 5px; border-radius: 4px; background: #4b4b4b; }

.tabs { display: flex; height: 43px; border-bottom: 8px solid #474747; }
.tab { padding: 0 15px 3px; }
.tab--on { width: 40px; padding: 0 0 3px; background: #474747; color: #ddd; border-right: 1px solid #111; }

/* Stage */
.stage { min-width: 0; padding: 0 3px 0 2px; background: #111; }
.bar-edge { height: 4px; background: #3d3d3d; border-bottom: 1px solid #111; }
.compressor {
  display: flex;
  align-items: flex-end;
  gap: 14px;
  padding: 10px 10px 17px;
  background: #c2bba4;
}
.pair { display: flex; gap: 5px; }
.meters { display: flex; gap: 2px; height: 87px; }
.meter {
  width: 16px;
  border: 1px solid #555;
  border-radius: 2px;
  background: repeating-linear-gradient(#0000 0 2px, #0009 2px 3px), linear-gradient(#3a1214 0 4px, #3a2f17 4px 36%, #1d1d1d 36%);
}
.meters--lit { height: 40px; }
.meters--lit .meter { background: repeating-linear-gradient(#ff7519 0 2px, #7b3205 2px 3px); }
.link, .power { display: flex; flex-direction: column; align-items: center; gap: 4px; height: 87px; }
.power { align-self: flex-start; width: 38px; }
.lamp {
  width: 20px;
  height: 20px;
  border: 2px solid #111;
  border-radius: 50%;
  background: radial-gradient(#3a3a3a 45%, #161616 60%);
  box-shadow: 0 0 1px 1px #6d695c;
}
.lamp--on { background: radial-gradient(#ff9a3c 50%, #7b2c00 66%); }

.ctl { display: flex; flex-direction: column; align-items: center; white-space: nowrap; }
.ctl svg { display: block; width: 36px; height: 34px; overflow: visible; }
.ctl input, .io input {
  width: 37px;
  height: 15px;
  border: 1px solid #2b2b2b;
  border-radius: 2px;
  background: #4d4d4d;
  color: #f2f2f2;
  font-size: 11px;
  line-height: 13px;
  text-align: center;
}
.ctl--m svg { width: 44px; height: 52px; }
.ctl--l svg { width: 52px; height: 57px; }
.ctl--m input { width: 55px; height: 17px; font-size: 12px; }
.ctl--l input { width: 60px; height: 17px; font-size: 12px; }

/* Instrument header */
.bar {
  display: flex;
  height: 39px;
  border-top: 5px solid #1b1b1b;
  border-bottom: 1px solid #111;
  background: #3c3c3c;
  color: #c4c4c4;
  font: 17px/33px "Noto Sans", sans-serif;
}
.bar > * { border-right: 2px solid #151515; }
.bar-btn { width: 34px; color: #666; }
.bar-btn--on { width: 33px; color: #fff; font-weight: 700; }
.bar-name { width: 192px; padding-left: 9px; }
.bar-snap { position: relative; width: 310px; padding: 0 20px; color: #5b5b5b; }
.bar-snap select { appearance: none; width: 100%; line-height: 33px; }
.bar-snap::after { content: ""; position: absolute; right: 12px; top: 15px; border: 5px solid transparent; border-top-color: #555; }
.bar-midi { display: flex; align-items: center; justify-content: center; gap: 4px; width: 58px; }
.bar-midi b { font: 700 8px/10px "DejaVu Sans", sans-serif; text-align: center; }
.bar-midi i { width: 4px; height: 14px; background: linear-gradient(#1a1a1a 0 4px, transparent 4px 10px, #1a1a1a 10px); }
.bar .bar-voices { padding-left: 22px; border: 0; }

/* Instrument panel */
.panel { padding: 4px 0 13px; background: #c2bba4; }
.strips { display: grid; grid-template-columns: 202fr 203fr 197fr 196fr 414fr 288fr; margin-left: 16px; }
.strip { width: 153px; padding: 0 0 5px; border: 1px solid #383733; border-radius: 3px; }
.strip legend { margin: 0 auto; padding: 0 4px; font-size: 13px; line-height: 16px; }
.io { display: flex; justify-content: center; gap: 4px; padding: 2px 3px 10px 0; }
.io label { display: flex; flex-direction: column; align-items: center; gap: 4px; }
.io input { width: 61px; height: 16px; font-size: 12px; }
.knobs { display: grid; grid-template-columns: 70px 72px; grid-template-rows: 71px 71px 66px 71px 71px 71px 71px; align-items: start; }
.knobs--wide { grid-template-columns: 70px 84px; }
.span { grid-column: 1 / 3; justify-self: start; width: 142px; }
.r1 { grid-row: 1; }
.r2 { grid-row: 2; }
.r3 { grid-row: 3; }
.r4 { grid-row: 4; }
.r5 { grid-row: 5; }
.r6 { grid-row: 6; }
.r7 { grid-row: 7; }

.strip--metal { width: 414px; padding: 0 16px 5px; }
.strip--metal .io { padding: 2px 16px 6px 0; }
.operator { height: 206px; margin-bottom: 8px; border: 1px solid #383733; border-radius: 2px; }
.operator h3 { height: 20px; margin: 0; font: 13px/18px "DejaVu Sans", sans-serif; text-align: center; color: #f0f0f0; background: #585651; border-bottom: 1px solid #383733; }
.op-body { display: grid; grid-template-columns: 82px 213px 1fr; padding: 2px 6px 0 0; }
.op-side { display: flex; flex-direction: column; gap: 4px; }
.op-mid { padding-top: 3px; }
.env { display: block; width: 207px; height: 80px; margin: 0 3px 6px; background: #282620; border: 1px solid #222; border-radius: 2px; }
.env-fill { fill: #52321a; }
.env-line { fill: none; stroke: #ee6610; stroke-width: 2; }
.adsr { display: grid; grid-template-columns: repeat(4, 1fr); }
.metal-out { display: grid; grid-template-columns: 84px 190px 119px; margin-top: -3px; }

.mods { display: flex; flex-direction: column; align-items: center; padding: 65px 20px 0 0; }
.trigger { display: flex; flex-direction: column; align-items: center; gap: 3px; }
.trigger div { display: flex; align-items: center; gap: 12px; height: 22px; }
.trigger--timing { margin-right: 8px; }
.trigger--freeze { margin: 17px 0 0 16px; }
.mod-freq { margin-top: 24px; }
.mod-amount { margin-top: 23px; }
.mod-swing { margin-top: 17px; }

.sequencer {
  display: grid;
  grid-template-columns: repeat(16, 1fr);
  grid-auto-rows: 1fr;
  height: 375px;
  margin: 10px 13px 0 12px;
  border: 2px solid #4c4b47;
  border-width: 2px 1px 1px 3px;
  background: #303030;
}
.sequencer i { border-right: 1px solid #474747; border-bottom: 1px solid #474747; }

/* Patch canvas */
.patch { position: relative; height: 540px; margin-top: 32px; background: #363b3f; overflow: hidden; color: #ffd35c; }
.wires { position: absolute; left: 0; top: 0; }
.wire { fill: none; stroke: #c6b077; stroke-width: 2; stroke-linejoin: round; }
.wire--audio { stroke: #d6d6d6; }

.port { display: flex; align-items: center; gap: 2px; height: 22px; color: #ffd35c; }
.port::before { content: ""; flex: none; width: 10px; height: 10px; border: 1px solid #3a3e40; border-radius: 50%; background: #ffd35c; margin-left: -2px; }
.port--w { color: #f2f2f2; }
.port--w::before { background: #f2f2f2; }
.port--g::before { background: #8c8c8c; }

.node { position: absolute; }
.node-body { position: relative; display: grid; grid-template-columns: 1fr auto 1fr; border: 1px solid #868482; background: #757c80; }
.node-body--switch { grid-template-columns: 60px auto 1fr; }
.node-body > .ports:nth-child(2) { grid-column: 3; }
.ports { display: flex; flex-direction: column; }
.ports--out .port { flex-direction: row-reverse; }
.ports--out .port::before { margin: 0 -2px 0 0; }
.ports--6 { padding-top: 5px; }
.ports--11 { padding-top: 11px; }
.ports--17 { padding-top: 16px; }
.ports--28 { padding-top: 27px; }
.ports--38 { padding-top: 38px; }
.ports--44 { padding-top: 43px; }
.ports--82 { padding-top: 81px; }
.ports--ten { height: 223px; }
.ports--ten .port { flex: 1; }
.pic { align-self: center; }
.dots::before, .dots--both::after { content: ""; position: absolute; left: 2px; bottom: 1px; width: 8px; height: 2px; background: repeating-linear-gradient(90deg, #1d1d1d 0 2px, transparent 2px 3px); }
.dots--both::after { left: auto; right: 4px; }

.node-foot { display: flex; gap: 1px; height: 20px; margin-top: 1px; color: #222; line-height: 18px; }
.node-foot span { flex: 1; padding-left: 7px; background: #bdbab8; white-space: nowrap; }
.node-foot--macro span { background: #b1bd97; }
.badge { width: 13px; height: 20px; background: #ffd05c; fill: #2c2c2c; }
.badge--g { background: #8f9294; }
.badge--o { background: #ff9f5c; }

.const { position: absolute; display: flex; justify-content: space-between; width: 82px; height: 21px; padding-left: 7px; border: 1px solid #868482; background: #757c80; line-height: 19px; }
.const .port, .knobref .port { height: 21px; flex-direction: row-reverse; }
.const .port { height: 19px; }
.const .port::before { margin: 0 -2px 0 0; }
.knobref .port::before { margin: 0 -1px 0 0; }

.knobref { position: absolute; display: flex; width: 97px; height: 21px; background: #757c80; line-height: 20px; }
.knobref svg { flex: none; width: 16px; height: 21px; background: #bdbab8; border-right: 1px solid #363b3f; }
.knobref span { flex: 1; padding-left: 6px; white-space: nowrap; }
.knobref .port { flex: none; width: 0; }

.outlet { position: absolute; display: flex; width: 76px; height: 21px; background: #757c80; color: #f2f2f2; line-height: 20px; }
.outlet .port { height: 21px; width: 18px; }
.outlet span { flex: 1; }
.outlet em { width: 23px; background: #bdbab8; color: #333; text-align: center; border-left: 1px solid #363b3f; }
```
